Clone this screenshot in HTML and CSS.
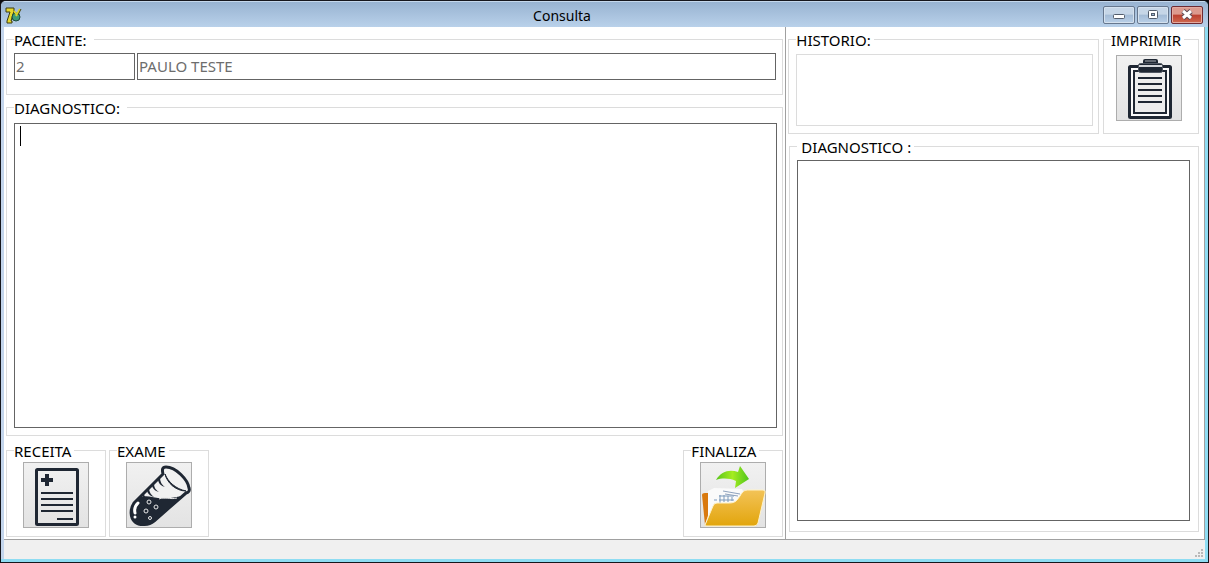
FILE: index.html
```html
<!DOCTYPE html>
<html lang="pt-BR">
<head>
<meta charset="utf-8">
<title>Consulta</title>
<link rel="stylesheet" href="styles.css">
</head>
<body>
<div class="window">
  <header class="titlebar">
    <svg class="app-icon" viewBox="0 0 17 17" aria-hidden="true">
      <path d="M1 1h8v3L6 14h1v2H2v-2l3-9H1z" fill="#e6d72c" stroke="#3b3a12"/>
      <circle cx="11" cy="10" r="4" fill="#3d9c78" stroke="#1d4a3e"/>
      <path d="M11 9l4-7M9 4l3 4" fill="none" stroke="#d8d329" stroke-width="2"/>
      <path d="M16 2l-3 6" stroke="#454315"/>
    </svg>
    <h1 class="title">Consulta</h1>
    <div class="window-buttons">
      <button class="win-btn" type="button" aria-label="Minimizar"><svg viewBox="0 0 30 16"><rect x="9.500" y="7.500" width="11" height="4" rx="1" fill="#fff" stroke="#535d6c"/></svg></button>
      <button class="win-btn" type="button" aria-label="Maximizar"><svg viewBox="0 0 30 16"><rect x="10.500" y="3.500" width="9" height="8" rx="1" fill="#fff" stroke="#535d6c"/><rect x="13.500" y="6.500" width="3" height="2" fill="#9fb8d3" stroke="#535d6c"/></svg></button>
      <button class="win-btn win-close" type="button" aria-label="Fechar"><svg viewBox="0 0 30 16"><path d="M11 4l8 7M19 4l-8 7" stroke="#5b4a55" stroke-width="5"/><path d="M11 4l8 7M19 4l-8 7" stroke="#fff" stroke-width="3"/></svg></button>
    </div>
  </header>

  <main class="content">
    <section class="left">
      <fieldset class="group">
        <legend class="wide-legend">PACIENTE:</legend>
        <div class="patient">
          <input class="field code" type="text" value="2" aria-label="Código do paciente" readonly>
          <input class="field name" type="text" value="PAULO TESTE" aria-label="Nome do paciente" readonly>
        </div>
      </fieldset>
      <fieldset class="group grow">
        <legend class="wide-legend"><label for="diagnostico">DIAGNOSTICO:</label></legend>
        <div class="memo-wrap">
          <textarea class="memo" id="diagnostico"></textarea>
          <span class="caret"></span>
        </div>
      </fieldset>
      <div class="actions">
        <fieldset class="group tool">
          <legend>RECEITA</legend>
          <button class="tool-btn" type="button" aria-label="Receita">
            <svg viewBox="0 0 66 66">
              <rect x="13.500" y="7.500" width="41" height="55" rx="1" fill="none" stroke="#1f2733" stroke-width="3"/>
              <path d="M24 12v12M18 18h12" stroke="#1f2733" stroke-width="4"/>
              <path d="M18 31h32M18 37h32M18 43h32M18 49h32M34 57h16" stroke="#1f2733" stroke-width="2"/>
            </svg>
          </button>
        </fieldset>
        <fieldset class="group tool">
          <legend>EXAME</legend>
          <button class="tool-btn" type="button" aria-label="Exame">
            <svg viewBox="0 0 66 66">
              <path d="M37 12L8 41C4 47 4 56 9 60c5 4 14 3 19-1l32-28c3-1 4-2 3-5C62 18 50 5 40 5c-4 0-4 3-3 7z" fill="#f1f1f1" stroke="#1f2733" stroke-width="3" stroke-linejoin="round"/>
              <path d="M14 35c7-2 12 0 18 1 8 1 16 0 27-3L28 60c-5 4-14 4-19 0-5-5-5-13-1-19z" fill="#1f2733"/>
              <path d="M39 12c3 8 11 15 21 17-10 0-19-8-21-17z" fill="#1f2733" stroke="#1f2733"/>
              <path d="M33 37c6-3 11 1 18-1" fill="none" stroke="#e8e8e8"/>
              <path d="M34 15c0 5 2 8 5 10-4-1-7-4-7-8zM28 21c0 5 2 7 5 9-4-1-7-4-7-7zM23 26c0 4 2 7 5 9-4-1-7-4-7-7zM18 31c0 3 1 4 3 5-3 0-5-2-5-3z" fill="#1f2733"/>
              <path d="M12 41c-3 3-4 6-3 10" fill="none" stroke="#fff" stroke-width="3" stroke-linecap="round"/>
              <circle cx="9" cy="55" r="1.500" fill="#fff"/>
              <g fill="none" stroke="#e8e8e8"><circle cx="23" cy="40" r="2"/><circle cx="30" cy="45" r="2"/><circle cx="20" cy="49" r="2"/><circle cx="24" cy="56" r="1.500"/></g>
            </svg>
          </button>
        </fieldset>
        <fieldset class="group tool last">
          <legend>FINALIZA</legend>
          <button class="tool-btn" type="button" aria-label="Finaliza">
            <svg viewBox="0 0 66 66">
              <defs>
                <linearGradient id="folder" x2="0" y2="1"><stop stop-color="#f3c358"/><stop offset="1" stop-color="#e2a50c"/></linearGradient>
                <linearGradient id="arrow" x2="1"><stop stop-color="#58c51b"/><stop offset=".5" stop-color="#a5ec21"/><stop offset="1" stop-color="#4fc51c"/></linearGradient>
              </defs>
              <path d="M2 33q0-2 3-2h5v16L5 63z" fill="#d9790e"/>
              <path d="M8 29l6-3 28 1 2 4-2 18-34 10z" fill="#fafafa"/>
              <path d="M23 29l17 3M25 32l13 2" stroke="#8fa2bd"/>
              <path d="M14 38h3M20 33v8M24 33v7M28 34v6M32 35v4M19 34h15M19 38h15" fill="none" stroke="#7d9abb"/>
              <path d="M5 63l8-19q1-3 4-3h12c7 0 8-3 11-7 3-5 4-6 9-6h14q3 0 2 3l-7 30q-1 3-4 3H7q-3 0-2-1z" fill="url(#folder)" stroke="#fff2c8"/>
              <path d="M16 18C21 9 30 7 38 10l2-6 9 13-14 9 1-7c-7-3-14-3-20-1z" fill="url(#arrow)"/>
            </svg>
          </button>
        </fieldset>
      </div>
    </section>

    <section class="right">
      <div class="top-row">
        <fieldset class="group history">
          <legend>HISTORIO:</legend>
          <div class="history-list"></div>
        </fieldset>
        <fieldset class="group print">
          <legend>IMPRIMIR</legend>
          <button class="tool-btn" type="button" aria-label="Imprimir">
            <svg viewBox="0 0 66 66">
              <rect x="13.500" y="11.500" width="41" height="51" rx="1" fill="#fafafa" stroke="#1f2733" stroke-width="3"/>
              <rect x="18" y="16" width="32" height="42" fill="#ededed" stroke="#1f2733" stroke-width="2"/>
              <path d="M22 23h24M22 29h24M22 35h24M22 41h24M22 47h24" stroke="#1f2733" stroke-width="2"/>
              <rect x="27" y="4" width="15" height="7" rx="2" fill="#1f2733"/>
              <path d="M29 6h11" stroke="#a9adb3"/>
              <rect x="22.500" y="8.500" width="24" height="9" rx="2" fill="#1f2733" stroke="#4f5661"/>
              <path d="M23 11h23" stroke="#d4d6da" stroke-width="2"/>
            </svg>
          </button>
        </fieldset>
      </div>
      <fieldset class="group grow past">
        <legend class="inset-legend"><label for="anterior">DIAGNOSTICO :</label></legend>
        <textarea class="memo" id="anterior" readonly></textarea>
      </fieldset>
    </section>
  </main>

  <footer class="statusbar">
    <svg class="grip" viewBox="0 0 8 8" aria-hidden="true"><path d="M6 0h2v2H6zM3 3h2v2H3zM6 3h2v2H6zM0 6h2v2H0zM3 6h2v2H3zM6 6h2v2H6z" fill="#b9b9b9"/></svg>
  </footer>
</div>
</body>
</html>
```
FILE: styles.css
```css
* { box-sizing: border-box; }

body {
  margin: 0;
  background: #0b0b0f;
  color: #000;
  font: 15px/20px "Noto Sans", "Open Sans", sans-serif;
}

.window {
  display: flex;
  flex-direction: column;
  min-height: 100vh;
  border: 1px solid #16161c;
  border-radius: 6px 6px 0 0;
  padding: 0 3px 3px;
  background: linear-gradient(90deg, #c3d5ec 50%, #8edcf2 50%);
  box-shadow: inset 0 -3px #8edcf2;
  overflow: hidden;
}

.titlebar {
  display: grid;
  grid-template-columns: 1fr auto 1fr;
  height: 26px;
  margin: 0 -3px;
  padding: 0 5px 0 4px;
  border-top: 1px solid #c5d8ec;
  background: linear-gradient(#98b3d1, #b9d1ea);
}

.app-icon { width: 17px; height: 17px; margin-top: 5px; }

.title {
  margin: 2px 0 0;
  padding-right: 84px;
  font-size: 14px;
  font-weight: 400;
  line-height: 24px;
}

.window-buttons {
  display: flex;
  justify-content: flex-end;
  gap: 2px;
  padding-top: 4px;
}

.win-btn {
  width: 32px;
  height: 18px;
  padding: 0;
  border: 1px solid #66778e;
  border-radius: 2px;
  background: linear-gradient(#c6d6e7 45%, #a4bcd6 50%, #b9d0e8);
  box-shadow: inset 0 0 0 1px #d5e2ef;
}
.win-btn svg { display: block; width: 100%; height: 100%; }

.win-close {
  border-color: #6e2a32;
  background: linear-gradient(#dc9a8e 45%, #bc4030 50%, #cf6a50);
  box-shadow: inset 0 0 0 1px #e3aaa0;
}

.content {
  flex: 1;
  display: grid;
  grid-template-columns: 783fr 418fr;
  background: #fff;
  border-right: 1px solid #a0a0a0;
}

.left {
  display: flex;
  flex-direction: column;
  padding: 0 2px 2px;
  border-right: 1px solid #a0a0a0;
}

.right {
  display: flex;
  flex-direction: column;
  padding: 0 5px 7px 2px;
}

.group {
  min-width: 0;
  margin: 0;
  padding: 0 5px 7px 7px;
  border: 1px solid #dcdcdc;
}

legend {
  height: 24px;
  padding: 3px 3px 0 0;
  line-height: 21px;
}
.wide-legend { padding-right: 7px; }
.inset-legend { padding-left: 4px; }

.grow {
  flex: 1;
  display: flex;
  flex-direction: column;
}

.patient {
  display: flex;
  gap: 2px;
  padding: 2px 1px 7px 0;
}

.field {
  height: 27px;
  padding: 0 1px 2px;
  border: 1px solid #646464;
  background: #fff;
  color: #6d6d6d;
  font: inherit;
  outline: none;
}
.code { width: 121px; }
.name { flex: 1; min-width: 0; }

.memo-wrap {
  position: relative;
  flex: 1;
  display: flex;
  padding-top: 4px;
}

.memo {
  flex: 1;
  width: 100%;
  margin: 0;
  padding: 2px 5px;
  border: 1px solid #646464;
  background: #fff;
  font: inherit;
  resize: none;
  outline: none;
}

.caret {
  position: absolute;
  top: 7px;
  left: 6px;
  width: 1px;
  height: 20px;
  background: #000;
}

.actions {
  display: flex;
  gap: 3px;
  margin-top: 2px;
}

.tool { width: 100px; padding: 0 0 8px 7px; }
.tool .tool-btn { margin-left: 9px; }
.last { margin-left: auto; }

.tool-btn {
  display: block;
  width: 66px;
  height: 66px;
  padding: 0;
  border: 1px solid #adadad;
  background: linear-gradient(#f1f1f1, #e3e3e3);
}
.tool-btn svg { display: block; width: 66px; height: 66px; margin: -1px; }

.top-row { display: flex; gap: 4px; }

.history {
  flex: 1;
  display: flex;
  flex-direction: column;
  padding: 3px 5px 7px 7px;
}
.history-list { flex: 1; border: 1px solid #dcdcdc; }

.print { width: 96px; padding: 4px 0 12px 7px; }
.print .tool-btn { margin-left: 5px; }

.past {
  margin-left: 1px;
  padding: 2px 8px 10px 7px;
}

.statusbar {
  display: flex;
  justify-content: flex-end;
  align-items: flex-end;
  height: 20px;
  padding: 2px;
  border-top: 1px solid #a0a0a0;
  background: #f0f0f0;
}
.grip { width: 8px; height: 8px; }
```
